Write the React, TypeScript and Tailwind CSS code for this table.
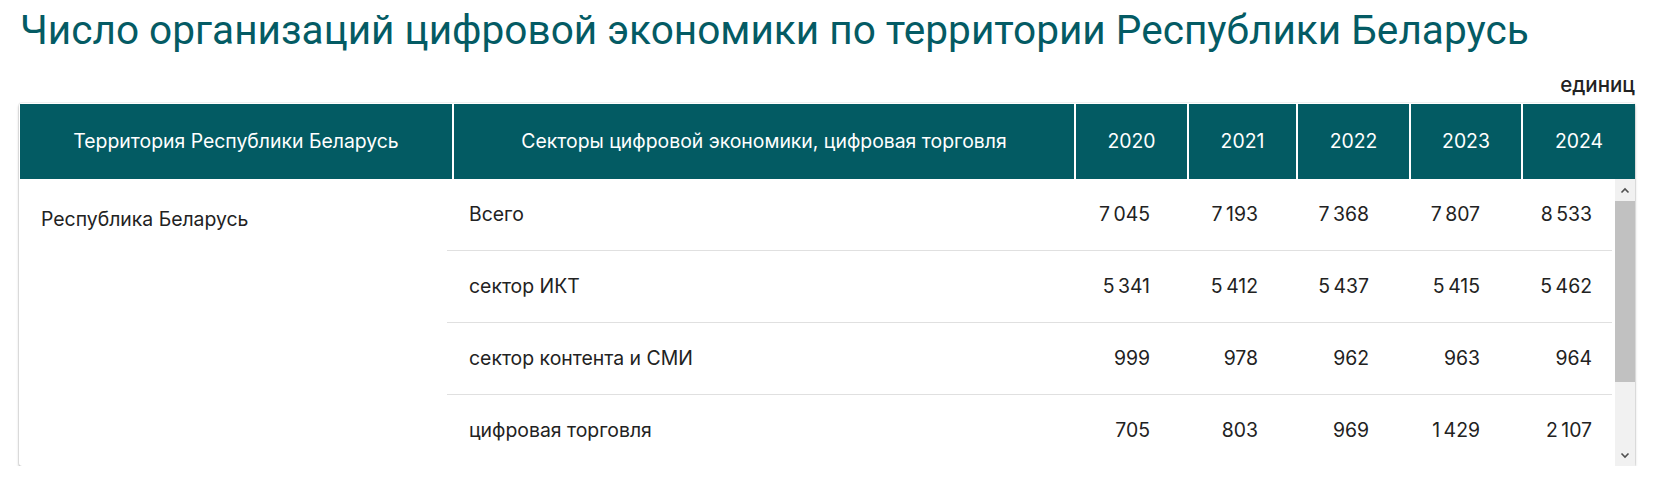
import React from "react";

const years = ["2020", "2021", "2022", "2023", "2024"];

const rows = [
  { name: "Всего", values: ["7\u202F045", "7\u202F193", "7\u202F368", "7\u202F807", "8\u202F533"] },
  { name: "сектор ИКТ", values: ["5\u202F341", "5\u202F412", "5\u202F437", "5\u202F415", "5\u202F462"] },
  { name: "сектор контента и СМИ", values: ["999", "978", "962", "963", "964"] },
  { name: "цифровая торговля", values: ["705", "803", "969", "1\u202F429", "2\u202F107"] },
];

const headWidths = ["w-[111px]", "w-[107px]", "w-[111px]", "w-[110px]", "w-[112px]"];
const bodyWidths = ["w-[110px]", "w-[108px]", "w-[111px]", "w-[111px]", "w-[112px]"];

function Chevron({ up }: { up?: boolean }) {
  return (
    <svg width="10" height="7" viewBox="0 0 10 7" className="text-[#505050]">
      <polyline
        points={up ? "1.5,5.5 5,2 8.5,5.5" : "1.5,1.5 5,5 8.5,1.5"}
        fill="none"
        stroke="currentColor"
        strokeWidth="1.6"
      />
    </svg>
  );
}

export default function App() {
  return (
    <div className="bg-white px-[19px] pt-[6px] font-['Inter','Noto_Sans',sans-serif]">
      {/* Title */}
      <h1 className="font-['Roboto',sans-serif] text-[40.6px] leading-[48px] text-[#045b64] pl-[1px]">
        Число организаций цифровой экономики по территории Республики Беларусь
      </h1>

      <div className="mt-[19px] text-right text-[20.5px] leading-[24px] font-medium text-[#222]">
        единиц
      </div>

      {/* Table card */}
      <div className="mt-[6px] rounded-[3px] bg-white pl-[1px] pt-[1px] shadow-[0_0_0_1px_rgba(0,0,0,0.05),0_2px_3px_rgba(0,0,0,0.28)]">
        {/* Header */}
        <div className="flex h-[75px] gap-[2px] text-[19.4px] text-white">
          <div className="flex w-[432px] items-center justify-center bg-[#035b63]">
            Территория Республики Беларусь
          </div>
          <div className="flex w-[620px] items-center justify-center bg-[#035b63]">
            Секторы цифровой экономики, цифровая торговля
          </div>
          {years.map((y, i) => (
            <div key={y} className={`flex ${headWidths[i]} items-center justify-center bg-[#035b63]`}>
              {y}
            </div>
          ))}
        </div>

        {/* Body */}
        <div className="flex h-[287px] overflow-hidden text-[19.4px] text-[#222]">
          <div className="w-[427px] pl-[21px] pt-[26px]">Республика Беларусь</div>
          <div className="flex flex-col">
            {rows.map((r, ri) => (
              <div
                key={r.name}
                className={`flex h-[72px] shrink-0 items-center ${ri < rows.length - 1 ? "border-b border-[#e0e0e0]" : ""}`}
              >
                <div className="w-[613px] pl-[22px]">{r.name}</div>
                {r.values.map((v, i) => (
                  <div key={i} className={`${bodyWidths[i]} pr-[20px] text-right`}>
                    {v}
                  </div>
                ))}
              </div>
            ))}
          </div>
          <div className="w-[3px]" />
          {/* Scrollbar */}
          <div className="flex w-[20px] flex-col bg-[#f1f1f1]">
            <div className="flex h-[22px] items-center justify-center">
              <Chevron up />
            </div>
            <div className="h-[181px] bg-[#c1c1c1]" />
            <div className="flex-1" />
            <div className="flex h-[22px] items-center justify-center">
              <Chevron />
            </div>
          </div>
        </div>
      </div>
    </div>
  );
}
